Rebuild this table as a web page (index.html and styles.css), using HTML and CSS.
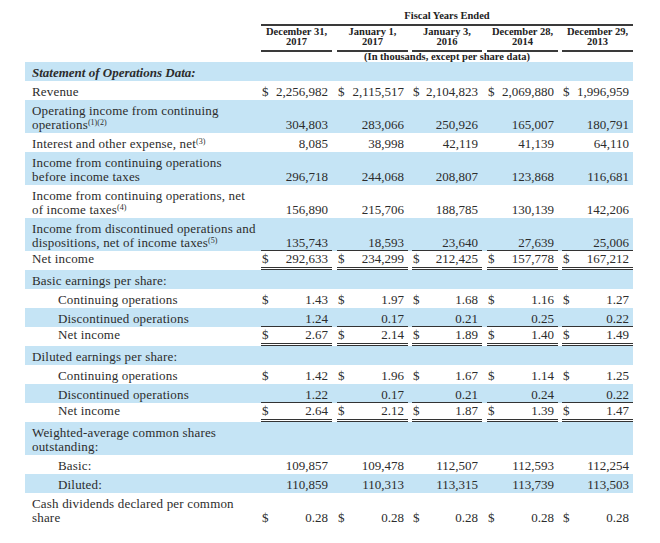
FILE: index.html
```html
<!DOCTYPE html>
<html>
<head>
<meta charset="utf-8">
<link rel="stylesheet" href="styles.css">
</head>
<body>
<div class="page">
<table class="fin">
<colgroup>
<col class="c-label"><col class="c-num"><col class="c-gap5"><col class="c-num"><col class="c-gap4"><col class="c-num3"><col class="c-gap5"><col class="c-num"><col class="c-gap4"><col class="c-num">
</colgroup>
<thead>
<tr class="h1"><th></th><th colspan="9" class="fy">Fiscal Years Ended</th></tr>
<tr class="h2"><th></th><th class="dh">December 31,<br>2017</th><th></th><th class="dh">January 1,<br>2017</th><th></th><th class="dh">January 3,<br>2016</th><th></th><th class="dh">December 28,<br>2014</th><th></th><th class="dh">December 29,<br>2013</th></tr>
<tr class="h3"><th></th><th colspan="9">(In thousands, except per share data)</th></tr>
</thead>
<tbody>
<tr class="shade"><td class="lbl sec">Statement of Operations Data:</td><td colspan="9"></td></tr>
<tr><td class="lbl">Revenue</td><td class="n"><span class="d">$</span>2,256,982</td><td></td><td class="n"><span class="d">$</span>2,115,517</td><td></td><td class="n"><span class="d">$</span>2,104,823</td><td></td><td class="n"><span class="d">$</span>2,069,880</td><td></td><td class="n"><span class="d">$</span>1,996,959</td></tr>
<tr class="shade"><td class="lbl">Operating income from continuing<br>operations<sup>(1)(2)</sup></td><td class="n">304,803</td><td></td><td class="n">283,066</td><td></td><td class="n">250,926</td><td></td><td class="n">165,007</td><td></td><td class="n">180,791</td></tr>
<tr><td class="lbl">Interest and other expense, net<sup>(3)</sup></td><td class="n">8,085</td><td></td><td class="n">38,998</td><td></td><td class="n">42,119</td><td></td><td class="n">41,139</td><td></td><td class="n">64,110</td></tr>
<tr class="shade"><td class="lbl">Income from continuing operations<br>before income taxes</td><td class="n">296,718</td><td></td><td class="n">244,068</td><td></td><td class="n">208,807</td><td></td><td class="n">123,868</td><td></td><td class="n">116,681</td></tr>
<tr><td class="lbl">Income from continuing operations, net<br>of income taxes<sup>(4)</sup></td><td class="n">156,890</td><td></td><td class="n">215,706</td><td></td><td class="n">188,785</td><td></td><td class="n">130,139</td><td></td><td class="n">142,206</td></tr>
<tr class="shade"><td class="lbl">Income from discontinued operations and<br>dispositions, net of income taxes<sup>(5)</sup></td><td class="n u">135,743</td><td></td><td class="n u">18,593</td><td></td><td class="n u">23,640</td><td></td><td class="n u">27,639</td><td></td><td class="n u">25,006</td></tr>
<tr class="tot"><td class="lbl">Net income</td><td class="n uu"><span class="d">$</span>292,633</td><td></td><td class="n uu"><span class="d">$</span>234,299</td><td></td><td class="n uu"><span class="d">$</span>212,425</td><td></td><td class="n uu"><span class="d">$</span>157,778</td><td></td><td class="n uu"><span class="d">$</span>167,212</td></tr>
<tr class="shade"><td class="lbl">Basic earnings per share:</td><td colspan="9"></td></tr>
<tr><td class="lbl sub">Continuing operations</td><td class="n"><span class="d">$</span>1.43</td><td></td><td class="n"><span class="d">$</span>1.97</td><td></td><td class="n"><span class="d">$</span>1.68</td><td></td><td class="n"><span class="d">$</span>1.16</td><td></td><td class="n"><span class="d">$</span>1.27</td></tr>
<tr class="shade"><td class="lbl sub">Discontinued operations</td><td class="n u">1.24</td><td></td><td class="n u">0.17</td><td></td><td class="n u">0.21</td><td></td><td class="n u">0.25</td><td></td><td class="n u">0.22</td></tr>
<tr class="tot"><td class="lbl sub">Net income</td><td class="n uu"><span class="d">$</span>2.67</td><td></td><td class="n uu"><span class="d">$</span>2.14</td><td></td><td class="n uu"><span class="d">$</span>1.89</td><td></td><td class="n uu"><span class="d">$</span>1.40</td><td></td><td class="n uu"><span class="d">$</span>1.49</td></tr>
<tr class="shade"><td class="lbl">Diluted earnings per share:</td><td colspan="9"></td></tr>
<tr><td class="lbl sub">Continuing operations</td><td class="n"><span class="d">$</span>1.42</td><td></td><td class="n"><span class="d">$</span>1.96</td><td></td><td class="n"><span class="d">$</span>1.67</td><td></td><td class="n"><span class="d">$</span>1.14</td><td></td><td class="n"><span class="d">$</span>1.25</td></tr>
<tr class="shade"><td class="lbl sub">Discontinued operations</td><td class="n u">1.22</td><td></td><td class="n u">0.17</td><td></td><td class="n u">0.21</td><td></td><td class="n u">0.24</td><td></td><td class="n u">0.22</td></tr>
<tr class="tot"><td class="lbl sub">Net income</td><td class="n uu"><span class="d">$</span>2.64</td><td></td><td class="n uu"><span class="d">$</span>2.12</td><td></td><td class="n uu"><span class="d">$</span>1.87</td><td></td><td class="n uu"><span class="d">$</span>1.39</td><td></td><td class="n uu"><span class="d">$</span>1.47</td></tr>
<tr class="shade"><td class="lbl">Weighted-average common shares<br>outstanding:</td><td colspan="9"></td></tr>
<tr><td class="lbl sub">Basic:</td><td class="n">109,857</td><td></td><td class="n">109,478</td><td></td><td class="n">112,507</td><td></td><td class="n">112,593</td><td></td><td class="n">112,254</td></tr>
<tr class="shade"><td class="lbl sub">Diluted:</td><td class="n">110,859</td><td></td><td class="n">110,313</td><td></td><td class="n">113,315</td><td></td><td class="n">113,739</td><td></td><td class="n">113,503</td></tr>
<tr><td class="lbl">Cash dividends declared per common<br>share</td><td class="n"><span class="d">$</span>0.28</td><td></td><td class="n"><span class="d">$</span>0.28</td><td></td><td class="n"><span class="d">$</span>0.28</td><td></td><td class="n"><span class="d">$</span>0.28</td><td></td><td class="n"><span class="d">$</span>0.28</td></tr>
</tbody>
</table>
</div>
</body>
</html>
```

FILE: styles.css
```css
* { box-sizing: border-box; }
html, body { margin: 0; background: #fff; }
body {
  font-family: "Liberation Serif", "Times New Roman", serif;
  color: #2c2c2c;
}
.page { padding: 10px 0 0 25px; }
.fin {
  border-collapse: separate;
  border-spacing: 0;
  table-layout: fixed;
  width: 608px;
}
.c-label { width: 236px; }
.c-num { width: 71px; }
.c-num3 { width: 70px; }
.c-gap5 { width: 5px; }
.c-gap4 { width: 4px; }

thead th {
  font-weight: bold;
  font-size: 10.5px;
  line-height: 10px;
  text-align: center;
  padding: 0;
  color: #222;
  white-space: nowrap;
}
.h1 th { height: 16px; padding-bottom: 5px; vertical-align: bottom; }
.h1 .fy { box-shadow: inset 0 -2px #3a3a3a; }
.h2 th { height: 26px; padding: 1px 0 5px; line-height: 10px; vertical-align: top; }
.h2 .dh { box-shadow: inset 0 -2px #3a3a3a; }
.h3 th { height: 10px; line-height: 10px; vertical-align: top; }

tbody td {
  font-size: 13px;
  line-height: 14px;
  padding: 4px 0 1px;
  vertical-align: bottom;
  white-space: nowrap;
}
.tot td { padding-top: 1px; padding-bottom: 4px; }
.shade td { background: #c5e4f5; }
.lbl { padding-left: 7px; letter-spacing: 0.18px; }
.lbl.sub { padding-left: 33px; }
.lbl.sec { font-weight: bold; font-style: italic; letter-spacing: 0; }
.n { text-align: right; padding-right: 4px; padding-left: 1px; }
.d { float: left; }
.u { box-shadow: inset 0 -1px #333; }
.uu { box-shadow: inset 0 -1px #333, inset 0 -2px #fff, inset 0 -3px #333; }
sup {
  font-size: 8px;
  line-height: 0;
  vertical-align: 4px;
  letter-spacing: 0;
}
```
